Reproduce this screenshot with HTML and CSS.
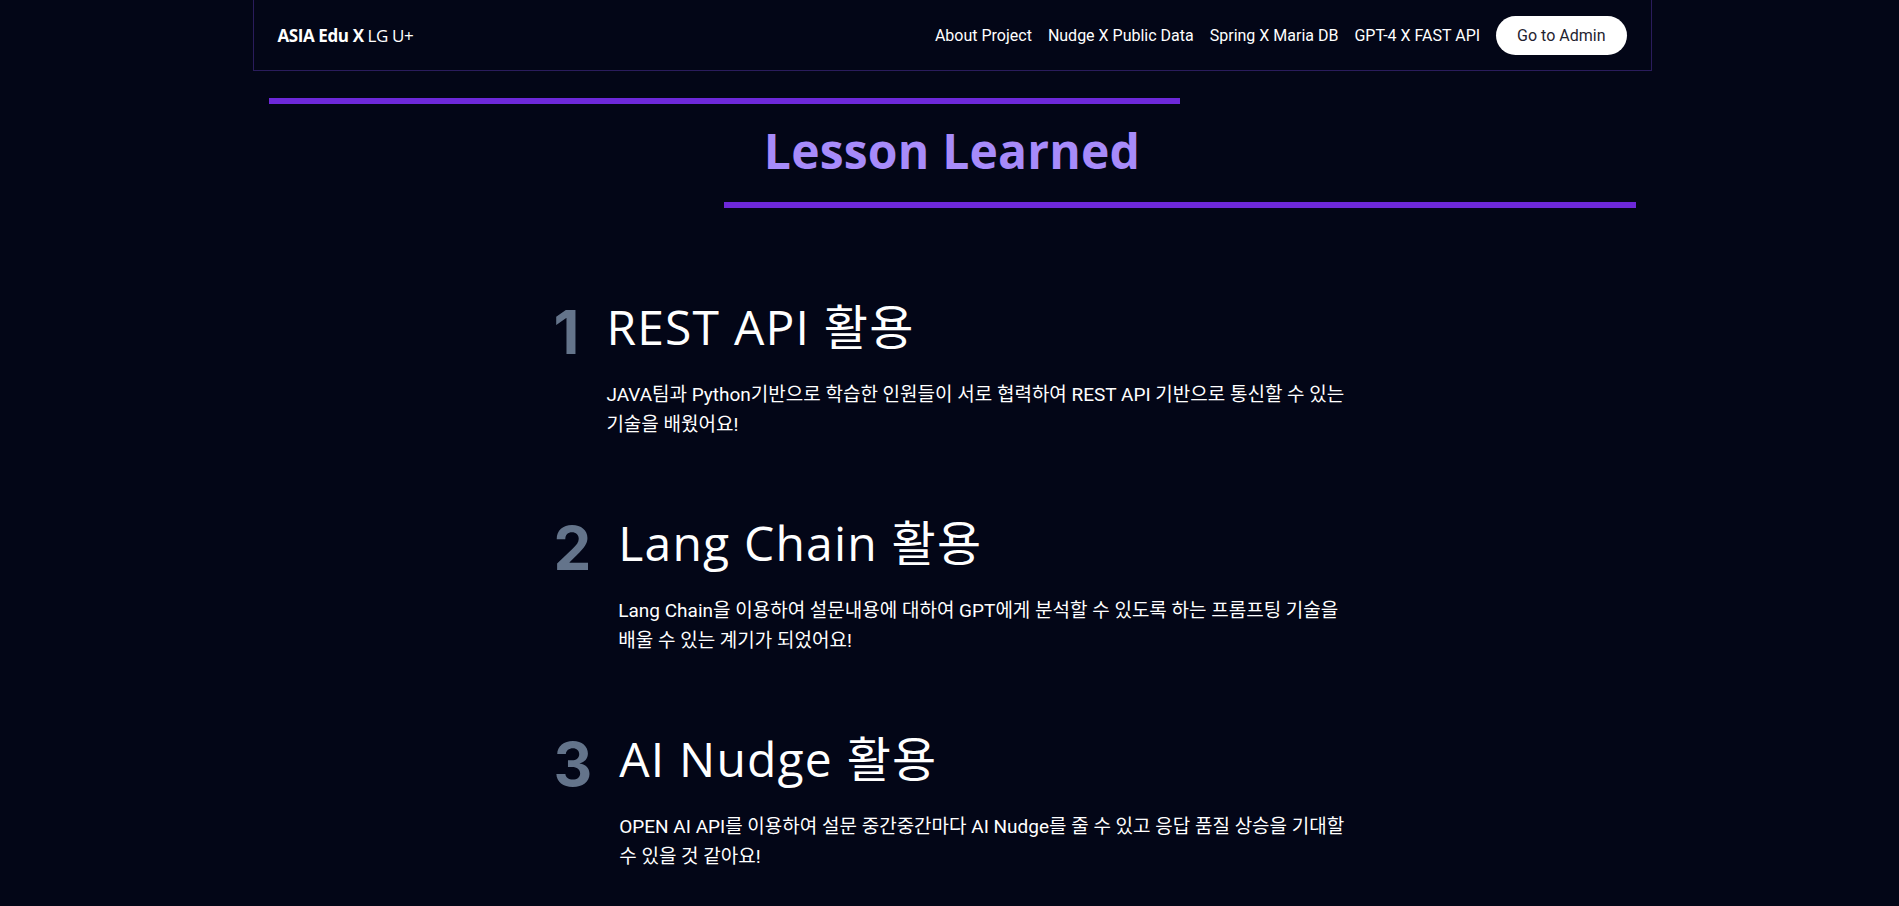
FILE: index.html
```html
<!DOCTYPE html>
<html lang="ko">
<head>
<meta charset="utf-8">
<title>Lesson Learned</title>
<link rel="stylesheet" href="styles.css">
</head>
<body>
<header class="site-header">
  <div class="logo"><strong>ASIA Edu X</strong> LG U+</div>
  <nav class="nav">
    <a class="nav-link" href="#">About Project</a>
    <a class="nav-link" href="#">Nudge X Public Data</a>
    <a class="nav-link" href="#">Spring X Maria DB</a>
    <a class="nav-link" href="#">GPT-4 X FAST API</a>
    <a class="nav-button" href="#">Go to Admin</a>
  </nav>
</header>

<section class="title-section">
  <div class="bar bar-left"></div>
  <h1 class="title">Lesson Learned</h1>
  <div class="bar bar-right"></div>
</section>

<main class="lessons">
  <article class="lesson">
    <div class="lesson-num">1</div>
    <div class="lesson-body">
      <h2 class="lesson-title">REST API 활용</h2>
      <p class="lesson-text">JAVA팀과 Python기반으로 학습한 인원들이 서로 협력하여 REST API 기반으로 통신할 수 있는 기술을 배웠어요!</p>
    </div>
  </article>
  <article class="lesson">
    <div class="lesson-num">2</div>
    <div class="lesson-body">
      <h2 class="lesson-title">Lang Chain 활용</h2>
      <p class="lesson-text">Lang Chain을 이용하여 설문내용에 대하여 GPT에게 분석할 수 있도록 하는 프롬프팅 기술을 배울 수 있는 계기가 되었어요!</p>
    </div>
  </article>
  <article class="lesson">
    <div class="lesson-num">3</div>
    <div class="lesson-body">
      <h2 class="lesson-title">AI Nudge 활용</h2>
      <p class="lesson-text">OPEN AI API를 이용하여 설문 중간중간마다 AI Nudge를 줄 수 있고 응답 품질 상승을 기대할 수 있을 것 같아요!</p>
    </div>
  </article>
</main>
</body>
</html>
```

FILE: styles.css
```css
* { box-sizing: border-box; }

html, body {
  margin: 0;
  padding: 0;
  background: #030617;
  color: #ffffff;
  font-family: Roboto, "Noto Sans CJK KR", sans-serif;
}

body { min-height: 906px; }

.site-header {
  width: 1399px;
  height: 71px;
  margin: 0 0 0 calc(50% - 697px);
  padding: 0 24px;
  display: flex;
  align-items: center;
  justify-content: space-between;
  border: 1px solid #2a1c5c;
  border-top: none;
}

.logo {
  font-family: "Open Sans", "Noto Sans CJK KR", sans-serif;
  font-size: 17px;
  font-weight: 400;
  color: #ffffff;
  letter-spacing: -0.4px;
}
.logo strong { font-weight: 700; }

.nav {
  display: flex;
  align-items: center;
  gap: 16px;
}

.nav-link {
  color: #ffffff;
  text-decoration: none;
  font-size: 16px;
}

.nav-button {
  display: inline-block;
  background: #ffffff;
  color: #1f2330;
  text-decoration: none;
  font-size: 16px;
  padding: 10px 21px;
  border-radius: 999px;
}

.title-section {
  width: 1399px;
  margin: 0 0 0 calc(50% - 697px);
  padding: 27px 16px 0;
  display: flex;
  flex-direction: column;
}

.bar {
  width: 66.7%;
  height: 6px;
  background: #6d28d9;
}
.bar-right { align-self: flex-end; }

.title {
  margin: 23px 0 27px;
  text-align: center;
  font-family: "Open Sans", sans-serif;
  font-weight: 700;
  font-size: 48px;
  line-height: 48px;
  color: #a78bfa;
  letter-spacing: 0.2px;
}

.lessons {
  width: 800px;
  margin: 95px auto 0;
  padding-left: 4px;
  display: flex;
  flex-direction: column;
  gap: 79px;
}

.lesson {
  display: flex;
  align-items: flex-start;
  gap: 27px;
}

.lesson-num {
  font-family: Inter, sans-serif;
  font-weight: 700;
  font-size: 60px;
  line-height: 58px;
  color: #64748b;
}

.lesson-body { flex: 1; }

.lesson-title {
  margin: 0;
  font-family: "Open Sans", "Noto Sans CJK KR", sans-serif;
  font-weight: 400;
  font-size: 48px;
  line-height: 48px;
  color: #ffffff;
  letter-spacing: 1.2px;
}

.lesson-text {
  margin: 29px 0 0;
  font-size: 19px;
  line-height: 30px;
  color: #ffffff;
  word-break: keep-all;
}
```
